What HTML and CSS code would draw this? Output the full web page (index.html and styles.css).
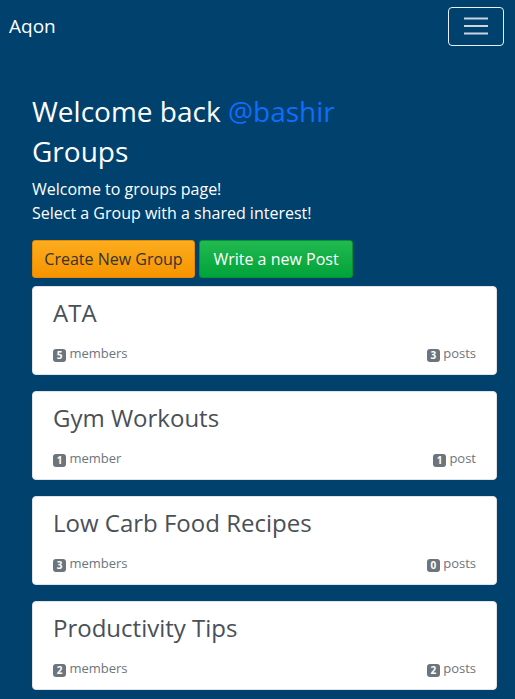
FILE: index.html
```html
<!DOCTYPE html>
<html>
<head>
<meta charset="utf-8">
<link rel="stylesheet" href="styles.css">
</head>
<body>
<nav class="navbar">
  <a class="brand" href="#">Aqon</a>
  <button class="toggler" aria-label="menu">
    <svg width="24" height="18" viewBox="0 0 24 18"><path d="M0 1.5h24M0 9h24M0 16.5h24" stroke="#c9d6e2" stroke-width="2"/></svg>
  </button>
</nav>
<main class="container">
  <h2 class="welcome">Welcome back <a href="#" class="user">@bashir</a></h2>
  <h2 class="title">Groups</h2>
  <p class="intro">Welcome to groups page!<br>Select a Group with a shared interest!</p>
  <div class="actions">
    <a class="btn btn-orange" href="#">Create New Group</a>
    <a class="btn btn-green" href="#">Write a new Post</a>
  </div>
  <div class="groups">
    <div class="card">
      <h3 class="card-title">ATA</h3>
      <div class="meta"><span><span class="badge">5</span> members</span><span><span class="badge">3</span> posts</span></div>
    </div>
    <div class="card">
      <h3 class="card-title">Gym Workouts</h3>
      <div class="meta"><span><span class="badge">1</span> member</span><span><span class="badge">1</span> post</span></div>
    </div>
    <div class="card">
      <h3 class="card-title">Low Carb Food Recipes</h3>
      <div class="meta"><span><span class="badge">3</span> members</span><span><span class="badge">0</span> posts</span></div>
    </div>
    <div class="card">
      <h3 class="card-title">Productivity Tips</h3>
      <div class="meta"><span><span class="badge">2</span> members</span><span><span class="badge">2</span> posts</span></div>
    </div>
  </div>
</main>
</body>
</html>
```
FILE: styles.css
```css
* { box-sizing: border-box; }
html, body { margin: 0; }
body {
  background: #00416e;
  font-family: "Open Sans", "Noto Sans", sans-serif;
  color: #fff;
  height: 699px;
  overflow: hidden;
}
.navbar {
  display: flex;
  justify-content: space-between;
  align-items: center;
  padding: 6px 11px 0 9px;
  height: 51px;
}
.brand {
  color: #fff;
  text-decoration: none;
  font-size: 19px;
  margin-top: -5px;
}
.toggler {
  width: 56px;
  height: 39px;
  border: 1px solid #e8eef4;
  border-radius: 4px;
  background: transparent;
  display: flex;
  align-items: center;
  justify-content: center;
  padding: 0;
  margin-top: -5px;
}
.container {
  padding: 40px 18px 0 32px;
}
.welcome, .title {
  font-size: 28px;
  font-weight: 400;
  margin: 0;
  line-height: 40px;
}
.user { color: #0d6efd; text-decoration: none; }
.intro {
  margin: 6px 0 0;
  font-size: 16px;
  line-height: 24px;
}
.actions {
  display: flex;
  gap: 4px;
  margin-top: 15px;
}
.btn {
  display: inline-flex;
  align-items: center;
  justify-content: center;
  height: 38px;
  padding: 0;
  font-size: 16px;
  border-radius: 3px;
  text-decoration: none;
  white-space: nowrap;
}
.btn-orange {
  width: 163px;
  background: linear-gradient(#fbac1f, #f79400);
  border: 1px solid #e58a00;
  color: #333;
}
.btn-green {
  width: 154px;
  background: linear-gradient(#22b950, #00a33a);
  border: 1px solid #009434;
  color: #fff;
}
.groups {
  display: flex;
  flex-direction: column;
  gap: 16px;
  margin-top: 8px;
}
.card {
  background: #fff;
  border-radius: 4px;
  border: 1px solid #dfe3e6;
  height: 89px;
  padding: 9px 20px 0 20px;
}
.card-title {
  margin: 0;
  font-size: 24px;
  font-weight: 400;
  color: #495057;
  line-height: 34px;
}
.meta {
  display: flex;
  justify-content: space-between;
  margin-top: 14px;
  font-size: 13px;
  color: #6c757d;
}
.badge {
  display: inline-block;
  background: #6c757d;
  color: #fff;
  font-size: 10px;
  font-weight: 700;
  width: 13px;
  height: 13px;
  line-height: 13px;
  text-align: center;
  border-radius: 3px;
  vertical-align: -1px;
}
```
